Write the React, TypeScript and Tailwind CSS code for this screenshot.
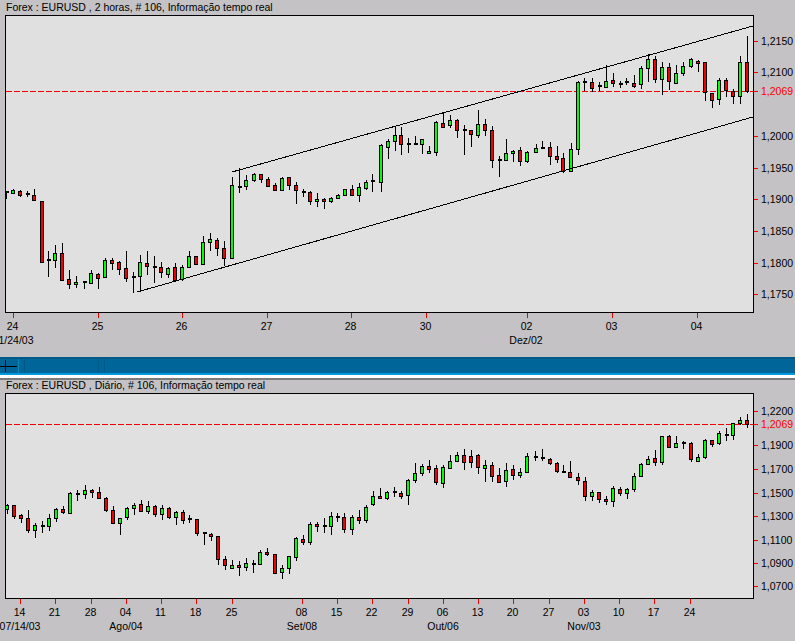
type C = [number, number, number, number, number, 0 | 1 | 2];
const G = 0, R = 1, K = 2;
const topData: C[] = [
[19,572,597,575,581,K],[41,568,582,571,580,G],[62,570,590,574,584,R],[83,573,590,583,583,K],[104,567,602,586,599,R],[126,603,788,604,785,R],[146,753,830,780,780,K],[167,735,804,760,779,G],[188,729,842,760,839,R],[209,810,866,838,853,R],
[230,828,863,847,853,G],[253,843,866,845,845,K],[275,811,852,820,848,G],[296,820,866,823,833,R],[317,774,833,781,832,G],[338,774,809,781,788,R],[359,784,824,787,806,R],[380,753,845,805,833,R],[401,817,878,830,830,K],[422,765,875,787,829,G],
[443,753,825,790,799,R],[464,769,848,800,800,K],[485,786,833,802,817,R],[506,801,833,805,823,G],[527,788,842,802,839,R],[548,796,842,802,838,G],[569,753,803,769,800,G],[590,768,795,769,791,R],[611,708,792,727,791,G],[632,699,752,718,727,G],
[653,715,768,721,745,R],[674,723,798,745,775,R],[698,531,775,556,775,G],[719,505,578,560,560,K],[740,526,570,541,559,G],[762,520,545,523,541,G],[783,523,548,523,538,R],[804,531,560,538,559,R],[825,550,570,556,569,R],[846,532,570,535,569,G],
[867,532,570,532,556,R],[888,547,612,556,571,R],[909,567,590,575,575,K],[930,574,615,577,604,R],[951,579,620,598,604,G],[972,595,627,598,604,R],[993,592,608,595,602,G],[1014,583,598,586,595,G],[1035,568,586,568,584,G],[1056,555,586,568,584,R],
[1077,550,606,562,584,G],[1098,540,571,547,565,G],[1118,522,575,544,544,K],[1143,433,575,436,545,G],[1164,417,476,424,440,G],[1185,380,452,406,424,G],[1204,382,464,406,433,R],[1226,415,458,431,431,K],[1247,408,434,431,431,K],[1268,418,461,418,431,G],
[1289,438,461,454,460,G],[1310,364,467,367,457,G],[1331,337,383,370,380,R],[1352,345,383,361,376,G],[1373,358,413,361,391,R],[1393,376,464,391,391,K],[1415,390,441,391,403,R],[1436,331,413,373,406,G],[1457,358,407,373,391,R],[1478,379,503,391,481,R],
[1498,468,530,481,481,K],[1520,417,481,460,481,G],[1541,450,485,454,460,G],[1562,440,497,451,484,R],[1583,454,490,457,484,G],[1608,433,460,445,457,G],[1627,424,446,444,444,K],[1650,427,495,442,469,R],[1671,438,490,469,478,R],[1691,460,518,475,512,R],
[1713,429,517,448,514,G],[1734,243,465,247,448,G],[1753,235,272,247,247,K],[1776,235,275,247,263,R],[1797,247,272,257,257,K],[1818,196,263,244,260,G],[1839,220,260,241,250,R],[1860,242,263,251,251,K],[1880,235,256,247,247,K],[1902,226,263,250,257,R],
[1923,199,268,205,253,G],[1944,163,245,178,205,G],[1965,168,250,178,238,R],[1986,186,284,202,238,G],[2007,190,270,202,244,R],[2028,195,253,220,248,G],[2051,186,227,199,220,G],[2073,175,205,178,199,G],[2094,181,215,182,187,R],[2115,187,302,187,277,R],
[2136,280,323,280,301,R],[2157,235,314,241,298,G],[2178,235,292,241,271,R],[2199,268,311,274,289,R],[2220,168,311,187,289,G],[2241,108,278,187,274,R],
];
const bottomData: C[] = [
[21,313,342,316,328,G],[42,316,356,316,347,R],[63,343,368,346,355,R],[84,330,398,355,391,R],[105,370,413,376,391,G],[126,364,398,377,377,K],[147,343,392,355,379,G],[168,325,365,328,355,G],[189,319,343,328,337,R],[210,277,341,280,338,G],
[231,271,302,281,281,K],[255,255,296,271,283,G],[276,268,293,271,277,R],[297,262,298,277,295,R],[318,292,336,295,331,R],[339,319,373,331,370,R],[360,355,404,355,370,G],[381,322,359,325,352,G],[402,310,344,316,325,G],[423,301,337,313,334,R],
[444,304,341,319,334,G],[465,316,350,319,343,R],[486,316,359,325,343,G],[507,320,356,325,352,R],[528,334,374,337,352,G],[549,331,371,337,361,R],[568,346,370,358,358,K],[591,358,407,358,400,R],[612,396,434,400,400,K],[633,399,422,403,409,R],
[654,408,495,409,478,R],[675,468,509,478,496,R],[698,481,507,496,505,G],[719,484,527,496,502,R],[740,474,512,490,502,G],[761,481,519,493,493,K],[782,451,496,457,493,G],[803,445,469,457,463,R],[825,463,521,463,520,R],[846,496,537,505,517,G],
[867,468,521,469,505,G],[888,412,482,415,472,G],[909,405,434,418,427,R],[930,366,434,373,427,G],[951,367,395,373,379,R],[972,354,398,377,377,K],[993,336,404,349,379,G],[1013,340,365,352,352,K],[1034,339,398,352,388,R],[1056,346,404,352,388,G],
[1077,330,371,352,361,R],[1098,316,368,322,361,G],[1119,273,317,289,313,G],[1142,265,298,289,295,R],[1163,274,301,277,295,G],[1184,262,292,277,277,K],[1204,274,298,280,289,R],[1225,238,314,241,286,G],[1247,190,250,220,241,G],[1268,193,227,199,220,G],
[1289,181,218,199,208,R],[1310,196,256,205,247,R],[1331,196,263,202,250,G],[1352,165,205,184,203,G],[1373,155,186,166,184,G],[1394,147,209,166,187,R],[1415,150,203,169,187,R],[1436,163,221,166,202,R],[1457,181,247,196,203,G],[1478,187,245,196,229,R],
[1499,205,250,226,245,R],[1520,190,261,211,244,G],[1541,196,239,208,226,R],[1562,205,233,217,226,G],[1583,160,220,169,217,G],[1607,153,184,171,171,K],[1628,148,184,173,173,K],[1650,175,196,178,190,R],[1671,187,220,190,214,R],[1691,196,220,216,216,K],
[1712,184,233,217,232,R],[1734,220,254,232,241,R],[1755,232,302,244,289,R],[1776,271,302,277,289,G],[1797,277,308,277,298,R],[1818,289,315,298,304,R],[1839,258,320,265,304,G],[1860,262,287,268,280,R],[1881,265,296,268,280,G],[1902,220,275,229,268,G],
[1923,190,230,193,229,G],[1944,169,195,178,193,G],[1965,151,197,175,187,R],[1986,107,194,109,187,G],[2007,106,144,109,142,R],[2028,109,145,130,142,G],[2051,122,148,128,128,K],[2073,127,186,128,178,R],[2094,163,186,172,182,G],[2115,118,178,121,172,G],
[2136,121,140,121,133,R],[2157,94,136,100,130,G],[2178,84,122,106,106,K],[2199,68,120,70,106,G],[2220,52,76,61,70,G],[2241,42,83,61,73,R],
];

function Candles({ data, y0 }: { data: C[]; y0: number }) {
  const py = (v: number) => y0 + Math.round(v / 3);
  return (
    <g shapeRendering="crispEdges">
      {data.map(([x, hi, lo, bt, bb, c], i) => {
        const col = Math.floor(x / 3);
        const t = py(bt);
        const b = py(bb);
        return (
          <g key={i}>
            <rect x={col} y={py(hi)} width={1} height={py(lo) - py(hi)} className="fill-black" />
            {c === K ? (
              <rect x={col - 1} y={t - 1} width={4} height={2} className="fill-black" />
            ) : (
              <>
                <rect x={col - 2} y={t} width={4} height={Math.max(b - t + 1, 3)} className="fill-black" />
                <rect x={col - 1} y={t + 1} width={2} height={Math.max(b - t - 1, 1)} className={c === G ? "fill-[#00ff00]" : "fill-[#f00000]"} />
              </>
            )}
          </g>
        );
      })}
    </g>
  );
}

type Tick = [number, string];
function Chart({ vb, data, y0, top, bottom, priceY, prices, xTicks, xMajor, lines }: {
  vb: string; data: C[]; y0: number; top: number; bottom: number; priceY: number;
  prices: Tick[]; xTicks: Tick[]; xMajor: Tick[]; lines?: number[][];
}) {
  return (
    <svg viewBox={vb} className="block w-[795px] shrink-0" height={Number(vb.split(" ")[3])} width={795}>
      <rect x={5.5} y={top + 0.5} width={748} height={bottom - top} className="fill-[#e0e0e0] stroke-black" shapeRendering="crispEdges" />
      <line x1={6} x2={753} y1={priceY + 0.5} y2={priceY + 0.5} strokeDasharray="6 2" className="stroke-[#f00000]" shapeRendering="crispEdges" />
      <Candles data={data} y0={y0} />
      {lines?.map((l, i) => (
        <line key={i} x1={l[0]} y1={l[1]} x2={l[2]} y2={l[3]} className="stroke-black" shapeRendering="crispEdges" />
      ))}
      <g shapeRendering="crispEdges" className="stroke-[#f00000]">
        {prices.map(([y]) => <line key={y} x1={754} x2={758} y1={y + 0.5} y2={y + 0.5} />)}
        {xTicks.map(([x]) => <line key={x} x1={x + 0.5} x2={x + 0.5} y1={bottom + 1} y2={bottom + 6} />)}
      </g>
      <g className="text-[10.5px] font-['Liberation_Sans',Arial,sans-serif]">
        {prices.map(([y, s]) => (
          <text key={y} x={761} y={y + 4} className={s === "1,2069" ? "fill-[#ff0000]" : "fill-black"}>{s}</text>
        ))}
        {xTicks.map(([x, s]) => (
          <text key={x} x={x - 0.5} y={bottom + 18} textAnchor="middle" className="fill-black">{s}</text>
        ))}
        {xMajor.map(([x, s]) => (
          <text key={x} x={x} y={bottom + 32} textAnchor="middle" className="fill-black">{s}</text>
        ))}
      </g>
    </svg>
  );
}

const Title = ({ children, h }: { children: string; h: string }) => (
  <div className={`${h} shrink-0 pl-[6px] text-[10.5px] text-black whitespace-nowrap overflow-hidden`}>{children}</div>
);

export default function App() {
  return (
    <div className="w-[795px] h-[641px] overflow-hidden flex flex-col bg-[#c4c2c4] font-['Liberation_Sans',Arial,sans-serif]">
      <Title h="h-[15px] leading-[14px]">Forex : EURUSD , 2 horas, # 106, Informação tempo real</Title>
      <Chart
        vb="0 15 795 342" data={topData} y0={0} top={15} bottom={312} priceY={91}
        prices={[[41,"1,2150"],[72,"1,2100"],[91,"1,2069"],[136,"1,2000"],[168,"1,1950"],[199,"1,1900"],[231,"1,1850"],[263,"1,1800"],[294,"1,1750"]]}
        xTicks={[[13,"24"],[98,"25"],[182,"26"],[267,"27"],[351,"28"],[426,"30"],[527,"02"],[612,"03"],[697,"04"]]}
        xMajor={[[16,"1/24/03"],[526,"Dez/02"]]}
        lines={[[232,172,753,26],[137,292,753,117]]}
      />
      <div className="h-[18px] shrink-0 flex gap-[5px] bg-[#006699] border-t-2 border-b-2 border-t-[#005a88] border-b-[#0099dd]">
        <div className="w-[19px] border-r border-[#0088bb] relative">
          <div className="absolute left-0 w-[17px] top-[7px] h-px bg-black" />
          <div className="absolute left-[5px] top-px bottom-px w-px bg-black" />
        </div>
        <div className="w-[75px] border-x border-[#005a88]" />
        <div className="flex-1 border-l border-[#005a88]" />
      </div>
      <div className="h-[5px] shrink-0 bg-white border-b-2 border-[#7a7a7a]" />
      <Title h="h-[13px] leading-[11px]">Forex : EURUSD , Diário, # 106, Informação tempo real</Title>
      <Chart
        vb="0 393 795 248" data={bottomData} y0={400} top={393} bottom={598} priceY={424}
        prices={[[411,"1,2200"],[424,"1,2069"],[445,"1,1900"],[469,"1,1700"],[493,"1,1500"],[516,"1,1300"],[540,"1,1100"],[563,"1,0900"],[586,"1,0700"]]}
        xTicks={[[20,"14"],[55,"21"],[91,"28"],[126,"04"],[161,"11"],[196,"18"],[232,"25"],[302,"08"],[337,"15"],[372,"22"],[408,"29"],[443,"06"],[478,"13"],[513,"20"],[549,"27"],[584,"03"],[619,"10"],[654,"17"],[690,"24"]]}
        xMajor={[[20,"07/14/03"],[126,"Ago/04"],[302,"Set/08"],[443,"Out/06"],[584,"Nov/03"]]}
      />
    </div>
  );
}
